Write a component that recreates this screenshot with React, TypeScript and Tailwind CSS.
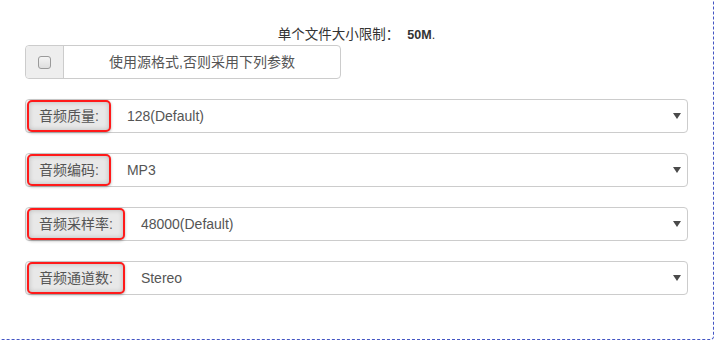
import React from "react";

const font = { fontFamily: '"Liberation Sans", Arial, "Noto Sans CJK SC", sans-serif' };

function Arrow() {
  return (
    <svg width="8" height="6" viewBox="0 0 8 6" className="mr-[6px] shrink-0">
      <polygon points="0,0 8,0 4,6" fill="#4a4a4a" />
    </svg>
  );
}

function SelectRow({ label, value }: { label: string; value: string }) {
  return (
    <div className="flex h-[34px] w-[663px] items-stretch rounded-[4px] border border-[#ccc] bg-white">
      <div className="ml-[1px] flex items-center rounded-[5px] border-2 border-[#ff1a1a] bg-[#e8e8e8] px-[10px] text-[14px] text-[#555] shadow-[inset_0_0_5px_rgba(0,0,0,0.2),0_1px_3px_rgba(0,0,0,0.3)]">
        {label}
      </div>
      <div className="flex flex-1 items-center justify-between pl-[16px] text-[14px] text-[#555]">
        <span>{value}</span>
        <Arrow />
      </div>
    </div>
  );
}

export default function App() {
  return (
    <div className="h-[342px] w-[716px] overflow-hidden bg-white" style={font}>
      <div className="ml-[-2px] mt-[-4px] h-[344px] w-[716px] rounded-[4px] border border-dashed border-[#4355c4] pl-[26px] pt-[28px]">
        <div className="flex h-[20px] w-[663px] items-center justify-center text-[13.5px] text-[#333]">
          <span>单个文件大小限制：</span>
          <span className="ml-[8px] text-[12.5px] font-bold">50M</span>
          <span className="text-[12.5px]">.</span>
        </div>
        <div className="flex h-[34px] w-[316px] rounded-[4px] border border-[#ccc]">
          <div className="flex w-[38px] items-center justify-center rounded-l-[4px] border-r border-[#ccc] bg-[#eee]">
            <div className="h-[13px] w-[13px] rounded-[3px] border border-[#9a9a9a] bg-gradient-to-b from-[#f4f4f4] to-[#dedede]" />
          </div>
          <div className="flex flex-1 items-center justify-center text-[14px] text-[#555]">
            使用源格式,否则采用下列参数
          </div>
        </div>
        <div className="mt-[20px] flex flex-col gap-[20px]">
          <SelectRow label="音频质量:" value="128(Default)" />
          <SelectRow label="音频编码:" value="MP3" />
          <SelectRow label="音频采样率:" value="48000(Default)" />
          <SelectRow label="音频通道数:" value="Stereo" />
        </div>
      </div>
    </div>
  );
}
